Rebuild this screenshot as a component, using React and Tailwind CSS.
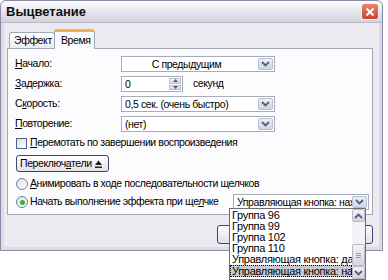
import React from "react";

/* ─── Small drawings ─────────────────────────────────────────── */

function Chevron({ up = false }) {
  return (
    <svg width="9" height="6" viewBox="0 0 9 6" className={up ? "rotate-180" : ""}>
      <path d="M1 1 L4.5 4.5 L8 1" fill="none" stroke="#4d6185" strokeWidth="1.8" />
    </svg>
  );
}

function ArrowBox({ className = "" }) {
  return (
    <div className={`w-[15px] shrink-0 flex items-center justify-center bg-gradient-to-b from-[#eef0f6] to-[#cfd5e3] border border-[#b7bfcf] rounded-[2px] ${className}`}>
      <Chevron />
    </div>
  );
}

function Select({ value, width = "w-[154px]", center = false }) {
  return (
    <div className={`${width} h-[16px] bg-white border border-[#a7aebb] flex items-stretch p-[1px]`}>
      <span className={`flex-1 leading-[12px] pl-[2px] whitespace-nowrap overflow-hidden ${center ? "text-center pr-[10px]" : ""}`}>{value}</span>
      <ArrowBox />
    </div>
  );
}

function Label({ text, u }) {
  return (
    <span className="whitespace-nowrap">
      {text.slice(0, u)}
      <span className="underline">{text[u]}</span>
      {text.slice(u + 1)}
    </span>
  );
}

function Row({ label, u, children }) {
  return (
    <div className="flex items-center h-[16px]">
      <div className="w-[113px] pl-[7px]">
        <Label text={label} u={u} />
      </div>
      {children}
    </div>
  );
}

/* ─── Dialog ─────────────────────────────────────────────────── */

export default function App() {
  const items = ["Группа 96", "Группа 99", "Группа 102", "Группа 110", "Управляющая кнопка: да"];

  return (
    <div className="w-[388px] h-[280px] bg-white relative overflow-hidden text-[10.5px] tracking-[-0.4px] text-black" style={{ fontFamily: '"Liberation Sans", Arial, sans-serif' }}>
      {/* Window */}
      <div className="w-[383px] h-[251px] border border-[#8a89a6] rounded-t-[6px] bg-[#ebeaf0] flex flex-col">
        {/* Title bar */}
        <div className="h-[22px] flex items-center justify-between pl-[5px] pr-[3px] rounded-t-[6px] bg-gradient-to-b from-[#fdfdfe] via-[#e6e6ee] to-[#d3d3dd] border-b border-[#b9b9c8]">
          <span className="font-bold text-[13px] tracking-[0px] text-[#111]">Выцветание</span>
          <div className="w-[18px] h-[17px] rounded-[3px] bg-gradient-to-b from-[#e8836c] to-[#c9452c] border border-[#f3f3f3] flex items-center justify-center">
            <svg width="10" height="10" viewBox="0 0 10 10">
              <path d="M1.5 1.5 L8.5 8.5 M8.5 1.5 L1.5 8.5" stroke="white" strokeWidth="2" />
            </svg>
          </div>
        </div>

        {/* Body */}
        <div className="flex-1 flex flex-col px-[3px] pt-[5px] border-x-[3px] border-b-[3px] border-[#dcdbe4]">
          {/* Tabs */}
          <div className="flex items-end h-[20px] pl-[2px]">
            <div className="h-[16px] w-[46px] bg-gradient-to-b from-white to-[#ecebf1] border border-b-0 border-[#a2a8b4] rounded-t-[3px] flex items-center pl-[4px]">
              Эффект
            </div>
            <div className="h-[20px] w-[41px] -ml-[1px] bg-[#fcfcfe] border-x border-[#a2a8b4] rounded-t-[3px] border-t-[3px] border-t-[#f2b14a] flex items-center pl-[6px] relative z-10 -mb-[1px]">
              Время
            </div>
          </div>

          {/* Panel */}
          <div className="w-[366px] bg-[#fcfcfe] border border-[#a2a8b4] flex flex-col pt-[7px] pb-[4px] gap-[4px]">
            <Row label="Начало:" u={0}>
              <Select value="С предыдущим" center />
            </Row>
            <Row label="Задержка:" u={0}>
              <div className="w-[62px] h-[16px] bg-white border border-[#a7aebb] flex items-stretch p-[1px]">
                <span className="flex-1 pl-[2px] leading-[12px]">0</span>
                <div className="w-[12px] flex flex-col gap-[1px]">
                  <div className="flex-1 bg-gradient-to-b from-[#eef0f6] to-[#d3d8e5] border border-[#b7bfcf] flex items-center justify-center">
                    <svg width="5" height="3" viewBox="0 0 5 3"><path d="M0 3 L2.5 0 L5 3Z" fill="#4d6185" /></svg>
                  </div>
                  <div className="flex-1 bg-gradient-to-b from-[#eef0f6] to-[#d3d8e5] border border-[#b7bfcf] flex items-center justify-center">
                    <svg width="5" height="3" viewBox="0 0 5 3"><path d="M0 0 L2.5 3 L5 0Z" fill="#4d6185" /></svg>
                  </div>
                </div>
              </div>
              <span className="ml-[10px]">секунд</span>
            </Row>
            <Row label="Скорость:" u={1}>
              <Select value="0,5 сек. (очень быстро)" />
            </Row>
            <Row label="Повторение:" u={0}>
              <Select value="(нет)" />
            </Row>

            <div className="flex items-center h-[12px] pl-[8px] mt-[1px] gap-[3px]">
              <div className="w-[11px] h-[11px] border border-[#4b6690] bg-gradient-to-br from-[#dcdcd6] to-white" />
              <Label text="Перемотать по завершении воспроизведения" u={0} />
            </div>

            <div className="pl-[8px] mt-[2px]">
              <div className="w-[93px] h-[17px] border border-[#3b4a6b] rounded-[3px] bg-gradient-to-b from-white to-[#e3e3ea] flex items-center justify-between pl-[3px] pr-[6px]">
                <Label text="Переключатели" u={8} />
                <svg width="7" height="8" viewBox="0 0 7 8">
                  <path d="M0 5 L3.5 0.5 L7 5Z" fill="#222" />
                  <rect x="0" y="6.5" width="7" height="1.5" fill="#222" />
                </svg>
              </div>
            </div>

            <div className="flex items-center h-[12px] pl-[8px] mt-[2px] gap-[2px]">
              <div className="w-[12px] h-[12px] rounded-full border border-[#6a82ac] bg-gradient-to-br from-[#dedee0] to-white" />
              <Label text="Анимировать в ходе последовательности щелчков" u={0} />
            </div>

            <div className="flex items-center h-[16px] pl-[8px] gap-[2px]">
              <div className="w-[12px] h-[12px] rounded-full border border-[#6a82ac] bg-gradient-to-br from-[#dedee0] to-white flex items-center justify-center">
                <div className="w-[5px] h-[5px] rounded-full bg-[#30b23a]" />
              </div>
              <span className="w-[201px] whitespace-nowrap">
                Начать выполнение эффекта при ще<span className="underline">л</span>чке
              </span>
              <Select value="Управляющая кнопка: нажата" width="w-[136px]" />
            </div>
          </div>

          {/* Buttons, mostly hidden behind the open list */}
          <div className="flex justify-end gap-[6px] pr-[3px] pt-[10px]">
            <div className="w-[75px] h-[19px] border border-[#3b4a6b] rounded-[3px] bg-gradient-to-b from-white to-[#e0e0e8]" />
            <div className="w-[75px] h-[19px] border border-[#3b4a6b] rounded-[3px] bg-gradient-to-b from-white to-[#e0e0e8]" />
          </div>
        </div>
      </div>

      {/* Open dropdown list */}
      <div className="absolute left-[229px] top-[208px] w-[137px] h-[72px] bg-white border border-[#6f6f6f] flex text-[11px] tracking-[-0.3px]">
        <div className="flex-1 flex flex-col pt-[1px] overflow-hidden">
          {items.map((t) => (
            <div key={t} className="h-[11px] leading-[11px] pl-[2px] whitespace-nowrap">{t}</div>
          ))}
          <div className="h-[12px] leading-[10px] pl-[1px] whitespace-nowrap bg-[#c9c9d3] border border-dotted border-black">
            Управляющая кнопка: нажата
          </div>
        </div>
        <div className="w-[13px] flex flex-col bg-[#f4f4f8]">
          <div className="h-[13px] flex items-center justify-center bg-gradient-to-b from-[#f3f3f7] to-[#d3d3de] border border-[#b9b9c8] rounded-[2px]">
            <Chevron up />
          </div>
          <div className="flex-1" />
          <div className="h-[22px] bg-gradient-to-b from-[#f3f3f7] to-[#d6d6e0] border border-[#b9b9c8] rounded-[2px] flex flex-col items-center justify-center gap-[1px]">
            <div className="w-[5px] h-[1px] bg-[#9a9aaa]" />
            <div className="w-[5px] h-[1px] bg-[#9a9aaa]" />
            <div className="w-[5px] h-[1px] bg-[#9a9aaa]" />
          </div>
          <div className="h-[13px] flex items-center justify-center bg-gradient-to-b from-[#f3f3f7] to-[#d3d3de] border border-[#b9b9c8] rounded-[2px]">
            <Chevron />
          </div>
        </div>
      </div>
    </div>
  );
}
